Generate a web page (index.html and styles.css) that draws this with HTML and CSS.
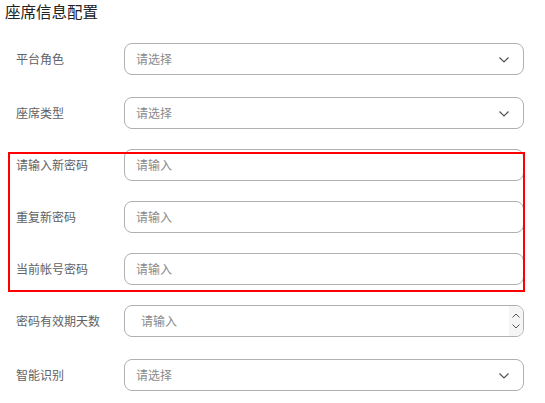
FILE: index.html
```html
<!DOCTYPE html>
<html lang="zh">
<head>
<meta charset="utf-8">
<link rel="stylesheet" href="styles.css">
</head>
<body>
<div class="page">
  <h2 class="title">座席信息配置</h2>
  <div class="form">
    <div class="row first">
      <label class="label">平台角色</label>
      <div class="control select"><span class="ph">请选择</span>
        <svg class="chev" width="10" height="6" viewBox="0 0 10 6"><path d="M0.5 0.5 L5 5 L9.5 0.5" fill="none" stroke="#555" stroke-width="1.2"/></svg>
      </div>
    </div>
    <div class="row">
      <label class="label">座席类型</label>
      <div class="control select"><span class="ph">请选择</span>
        <svg class="chev" width="10" height="6" viewBox="0 0 10 6"><path d="M0.5 0.5 L5 5 L9.5 0.5" fill="none" stroke="#555" stroke-width="1.2"/></svg>
      </div>
    </div>
    <div class="row">
      <label class="label">请输入新密码</label>
      <div class="control"><span class="ph">请输入</span></div>
    </div>
    <div class="row">
      <label class="label">重复新密码</label>
      <div class="control"><span class="ph">请输入</span></div>
    </div>
    <div class="row">
      <label class="label">当前帐号密码</label>
      <div class="control"><span class="ph">请输入</span></div>
    </div>
    <div class="row">
      <label class="label">密码有效期天数</label>
      <div class="control number"><span class="ph">请输入</span>
        <div class="spin">
          <svg width="8" height="5" viewBox="0 0 8 5"><path d="M0.5 4.5 L4 1 L7.5 4.5" fill="none" stroke="#555" stroke-width="1"/></svg>
          <svg width="8" height="5" viewBox="0 0 8 5"><path d="M0.5 0.5 L4 4 L7.5 0.5" fill="none" stroke="#555" stroke-width="1"/></svg>
        </div>
      </div>
    </div>
    <div class="row last">
      <label class="label">智能识别</label>
      <div class="control select"><span class="ph">请选择</span>
        <svg class="chev" width="10" height="6" viewBox="0 0 10 6"><path d="M0.5 0.5 L5 5 L9.5 0.5" fill="none" stroke="#555" stroke-width="1.2"/></svg>
      </div>
    </div>
    <div class="highlight"></div>
  </div>
</div>
</body>
</html>
```
FILE: styles.css
```css
html, body {
  margin: 0;
  padding: 0;
  background: #fff;
}
body {
  font-family: "Noto Sans CJK SC", "Noto Sans", sans-serif;
  width: 545px;
  height: 403px;
  overflow: hidden;
}
.page {
  position: relative;
}
.title {
  margin: 0;
  padding-left: 5px;
  font-size: 15.5px;
  font-weight: 400;
  line-height: 22px;
  color: #222;
}
.form {
  position: relative;
  padding-top: 21px;
}
.row {
  display: flex;
  align-items: center;
  height: 32px;
  margin-bottom: 20px;
  padding-left: 16px;
}
.row.first {
  margin-bottom: 22px;
}
.row:nth-child(6) {
  margin-bottom: 22px;
}
.label {
  width: 108px;
  flex: none;
  font-size: 12px;
  color: #606266;
  line-height: 16px;
}
.control {
  box-sizing: border-box;
  width: 400px;
  height: 32px;
  border: 1px solid #b0b0b0;
  border-radius: 8px;
  display: flex;
  align-items: center;
  padding-left: 11px;
  position: relative;
}
.ph {
  font-size: 12px;
  color: #8a8a8a;
  line-height: 16px;
}
.select .chev {
  position: absolute;
  right: 14px;
  top: 13px;
}
.number {
  padding-left: 16px;
}
.spin {
  position: absolute;
  right: 0;
  top: 0;
  bottom: 0;
  width: 14px;
  background: #f5f5f5;
  border-radius: 0 7px 7px 0;
  display: flex;
  flex-direction: column;
  align-items: center;
  justify-content: center;
  gap: 6px;
}
.highlight {
  position: absolute;
  left: 8px;
  top: 130px;
  width: 513px;
  height: 136px;
  border: 2px solid #ff0000;
  pointer-events: none;
}
```
